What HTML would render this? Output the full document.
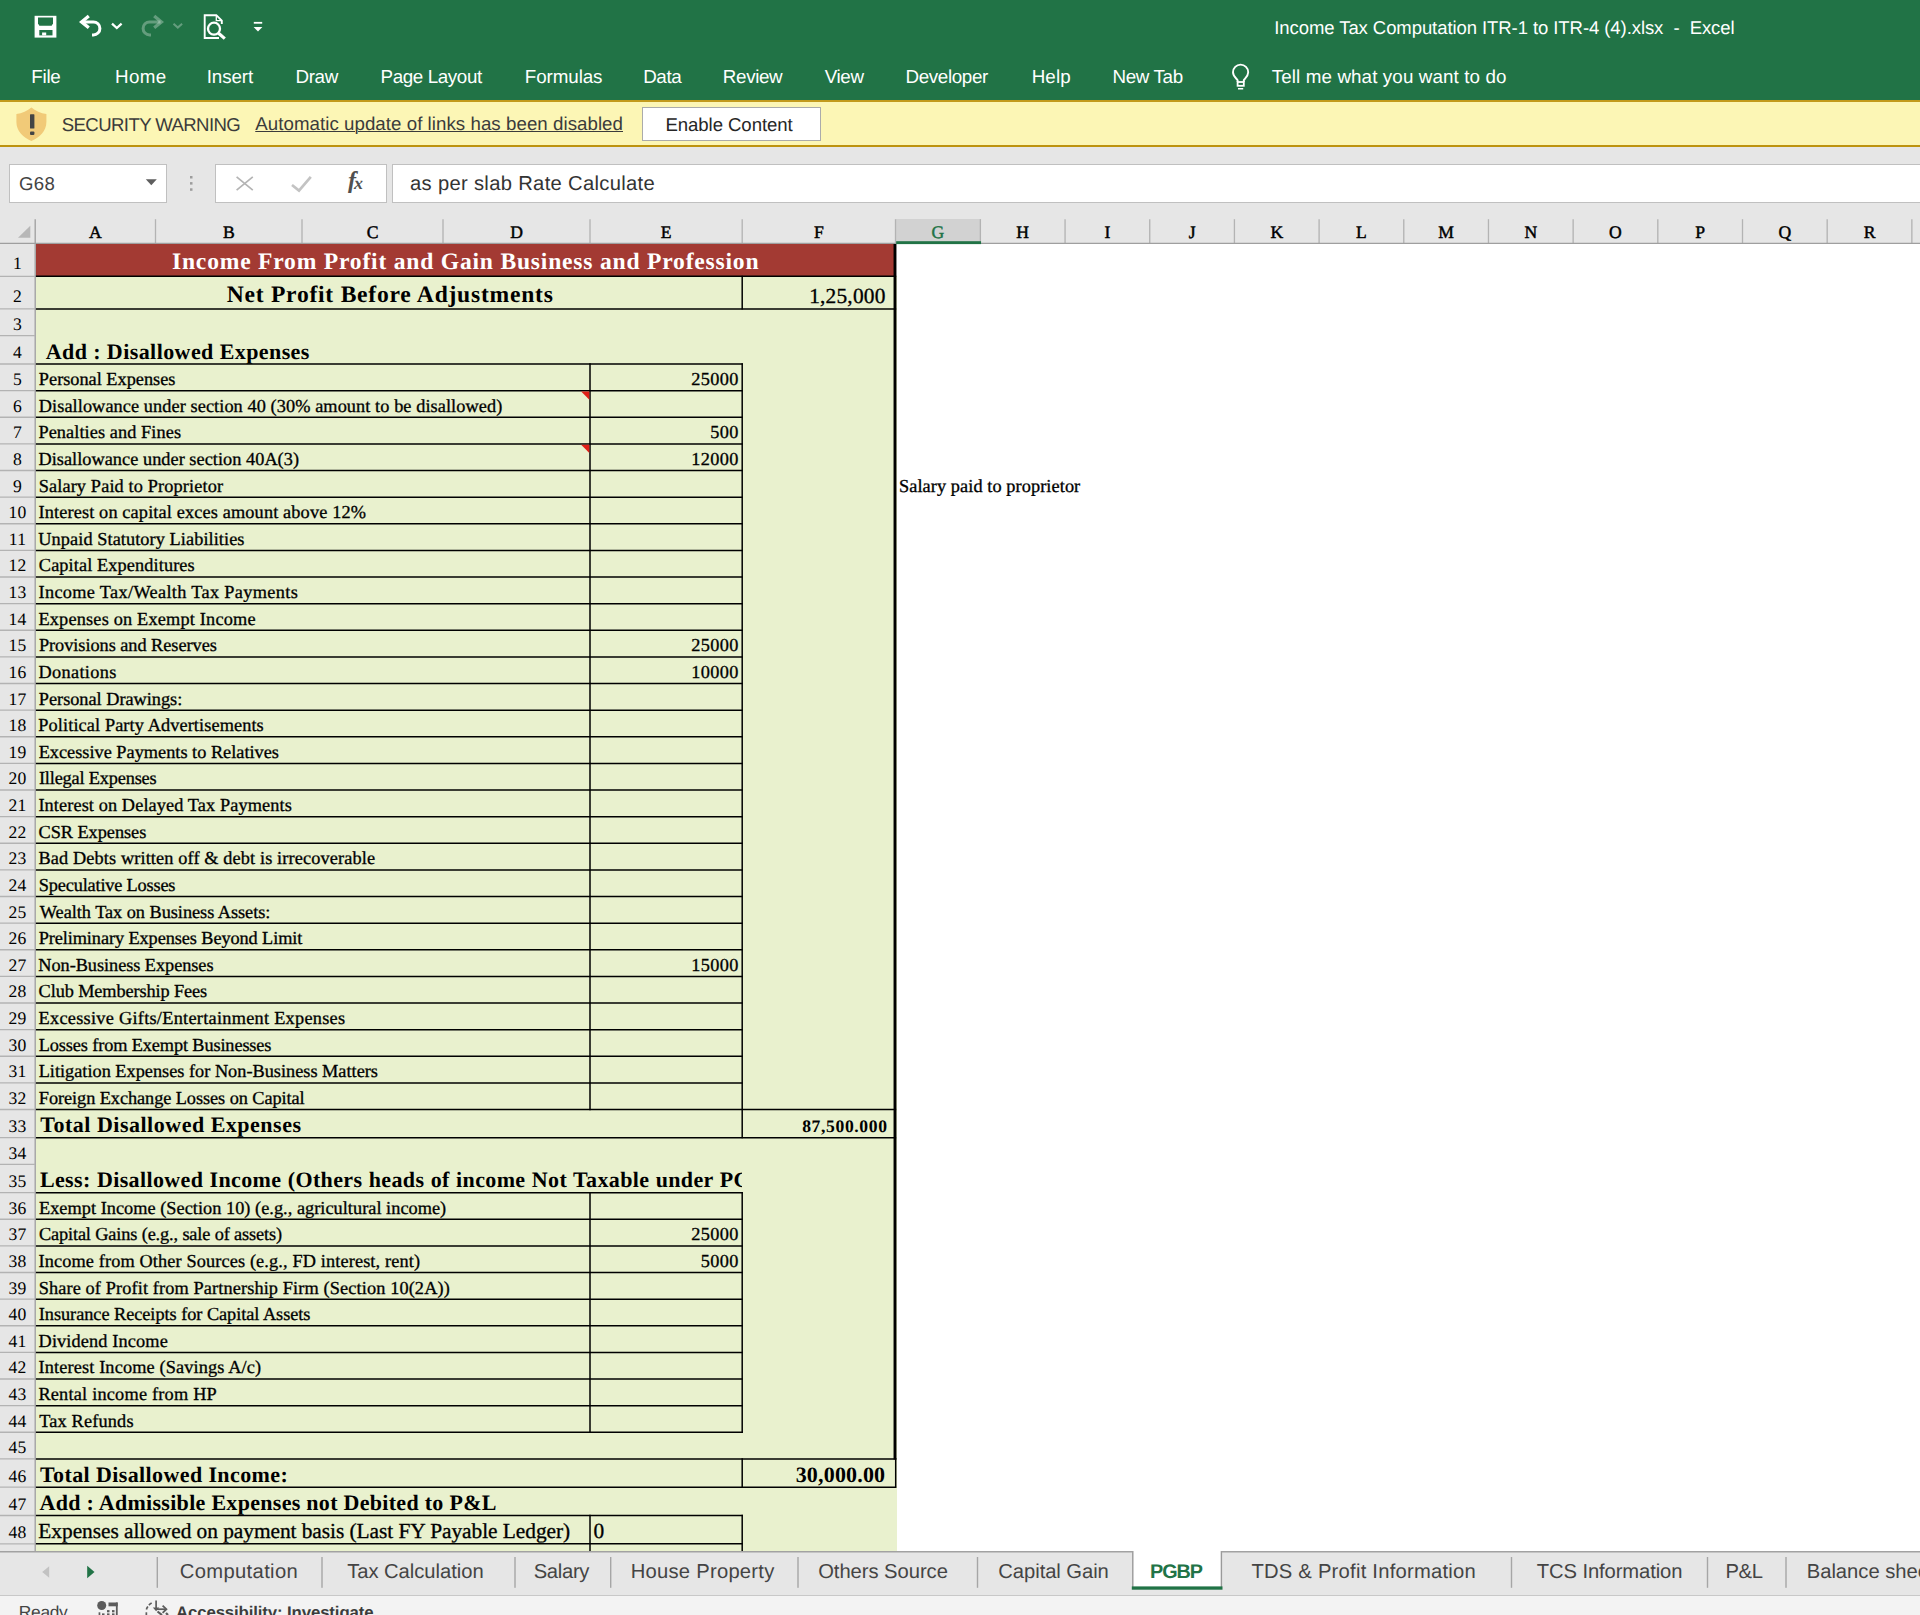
<!DOCTYPE html><html><head><meta charset="utf-8"><title>Excel</title>
<style>html,body{margin:0;padding:0;}body{width:1920px;height:1615px;position:relative;overflow:hidden;background:#fff;font-family:"Liberation Sans",sans-serif;text-rendering:geometricPrecision;}svg{position:absolute;left:0;top:0;overflow:visible}.t{position:absolute;white-space:pre;color:#000}.s{font-family:"Liberation Sans",sans-serif}.f{font-family:"Liberation Serif",serif}.b{position:absolute}</style></head><body>
<div class="b" style="left:0.00px;top:0.00px;width:1920.00px;height:100.00px;background:#217346;"></div>
<div class="t s" style="top:17px;line-height:21px;font-size:18.5px;color:#fff;letter-spacing:-0.073px;left:1274.25px;">Income Tax Computation ITR-1 to ITR-4 (4).xlsx  -  Excel</div>
<div class="t s" style="top:66px;line-height:21px;font-size:18.8px;color:#fff;letter-spacing:-0.2px;left:31.15px;">File</div>
<div class="t s" style="top:66px;line-height:21px;font-size:18.8px;color:#fff;letter-spacing:0.35px;left:115.00px;">Home</div>
<div class="t s" style="top:66px;line-height:21px;font-size:18.8px;color:#fff;letter-spacing:-0.08px;left:206.65px;">Insert</div>
<div class="t s" style="top:66px;line-height:21px;font-size:18.8px;color:#fff;letter-spacing:-0.35px;left:295.50px;">Draw</div>
<div class="t s" style="top:66px;line-height:21px;font-size:18.8px;color:#fff;letter-spacing:-0.38px;left:380.50px;">Page Layout</div>
<div class="t s" style="top:66px;line-height:21px;font-size:18.8px;color:#fff;letter-spacing:-0.086px;left:524.85px;">Formulas</div>
<div class="t s" style="top:66px;line-height:21px;font-size:18.8px;color:#fff;letter-spacing:-0.35px;left:643.15px;">Data</div>
<div class="t s" style="top:66px;line-height:21px;font-size:18.8px;color:#fff;letter-spacing:-0.35px;left:722.85px;">Review</div>
<div class="t s" style="top:66px;line-height:21px;font-size:18.8px;color:#fff;letter-spacing:-0.35px;left:824.65px;">View</div>
<div class="t s" style="top:66px;line-height:21px;font-size:18.8px;color:#fff;letter-spacing:-0.35px;left:905.50px;">Developer</div>
<div class="t s" style="top:66px;line-height:21px;font-size:18.8px;color:#fff;letter-spacing:0.133px;left:1031.65px;">Help</div>
<div class="t s" style="top:66px;line-height:21px;font-size:18.8px;color:#fff;letter-spacing:-0.35px;left:1112.50px;">New Tab</div>
<div class="t s" style="top:66px;line-height:21px;font-size:18.8px;color:#fff;letter-spacing:0.116px;left:1271.75px;">Tell me what you want to do</div>
<div class="b" style="left:0.00px;top:100.20px;width:1920.00px;height:46.40px;background:#fcf6b5;"></div>
<div class="b" style="left:0.00px;top:99.90px;width:1920.00px;height:1.70px;background:#c29a1c;"></div>
<div class="b" style="left:0.00px;top:145.00px;width:1920.00px;height:1.80px;background:#bd930f;"></div>
<svg width="1920" height="160" viewBox="0 0 1920 160"><rect x="34.6" y="15.8" width="21.8" height="21.8" fill="#fff"/><path d="M38,17.6 H53 V23.6 L51.6,25.7 H39.4 L38,23.6 Z" fill="#217346"/><rect x="39.3" y="30" width="13.2" height="5.4" fill="#217346"/><rect x="42.1" y="32.5" width="4.1" height="2.9" fill="#fff"/><path d="M88.8,16.0 L81.6,21.9 L88.8,27.8" fill="none" stroke="#fff" stroke-width="3.3" stroke-linejoin="miter"/><path d="M82.5,21.9 H93.4 A6.5,6.5 0 0 1 93.4,34.9 H92" fill="none" stroke="#fff" stroke-width="3.0"/><path d="M112,23.7 L116.8,28 L121.6,23.7" fill="none" stroke="#fff" stroke-width="2.3"/><path d="M154.2,16.0 L161.4,21.9 L154.2,27.8" fill="none" stroke="rgba(255,255,255,0.30)" stroke-width="3.3"/><path d="M160.5,21.9 H149.6 A6.5,6.5 0 0 0 149.6,34.9 H151" fill="none" stroke="rgba(255,255,255,0.30)" stroke-width="3.0"/><path d="M173.5,23.7 L177.8,27.6 L182.1,23.7" fill="none" stroke="rgba(255,255,255,0.30)" stroke-width="2.0"/><path d="M219,38 H204.7 V15.2 H216.3 L221.8,20.7 V24" fill="none" stroke="#fff" stroke-width="1.9"/><path d="M216.3,15.2 V20.7 H221.8" fill="none" stroke="#fff" stroke-width="1.3"/><circle cx="214" cy="28.7" r="6" fill="#217346" stroke="#fff" stroke-width="2.3"/><path d="M218.6,33.2 L224.8,38.6" stroke="#fff" stroke-width="3.2" fill="none"/><rect x="253.8" y="21.9" width="8.4" height="1.8" fill="#fff"/><polygon points="253.6,27 262.4,27 258,31.6" fill="#fff"/><path d="M1237.6,82 V80.2 C1236.6,78.6 1233,76.2 1233,72.2 A7.6,7.6 0 0 1 1248.2,72.2 C1248.2,76.2 1244.6,78.6 1243.8,80.2 V82" fill="none" stroke="#fff" stroke-width="1.9"/><rect x="1237.6" y="82" width="6.2" height="3.8" fill="none" stroke="#fff" stroke-width="1.8"/><rect x="1238" y="88" width="5.2" height="1.5" fill="#fff"/><path d="M31.4,107.6 C27.5,111 22,113.5 16.4,113.9 V122 C16.4,131 23,137.5 31.4,141 C39.8,137.5 46.4,131 46.4,122 V113.9 C40.8,113.5 35.3,111 31.4,107.6 Z" fill="#f1ca78"/><rect x="30" y="114.2" width="4.4" height="14.4" rx="0.6" fill="#444"/><rect x="30" y="131.6" width="4.4" height="3.3" rx="1" fill="#444"/></svg>
<div class="t s" style="top:114px;line-height:21px;font-size:18.6px;color:#3b3b3b;letter-spacing:-0.6px;left:61.75px;">SECURITY WARNING</div>
<div class="t s" style="top:113px;line-height:21px;font-size:18.7px;color:#3b3b3b;letter-spacing:0.048px;left:255.25px;text-decoration:underline;text-underline-offset:1.2px;text-decoration-thickness:1.3px;">Automatic update of links has been disabled</div>
<div class="b" style="left:642.00px;top:107.00px;width:178.50px;height:33.50px;background:#fff;box-sizing:border-box;border:1.33px solid #ababab;"></div>
<div class="t s" style="top:114px;line-height:21px;font-size:18.6px;color:#262626;letter-spacing:-0.077px;left:665.50px;">Enable Content</div>
<div class="b" style="left:0.00px;top:146.67px;width:1920.00px;height:72.00px;background:#e6e6e6;"></div>
<div class="b" style="left:8.50px;top:163.60px;width:158.30px;height:39.60px;background:#fff;box-sizing:border-box;border:1.5px solid #c0c0c0;"></div>
<div class="t s" style="top:173px;line-height:21px;font-size:18.6px;color:#444;letter-spacing:0.35px;left:19.00px;">G68</div>
<div class="b" style="left:215.40px;top:163.60px;width:171.20px;height:39.60px;background:#fff;box-sizing:border-box;border:1.5px solid #c0c0c0;"></div>
<div class="b" style="left:392.30px;top:163.60px;width:1540.00px;height:39.60px;background:#fff;box-sizing:border-box;border:1.5px solid #c0c0c0;"></div>
<div class="t s" style="top:173px;line-height:22px;font-size:20.2px;color:#333;letter-spacing:0.32px;left:410.00px;">as per slab Rate Calculate</div>
<svg width="1920" height="220" viewBox="0 0 1920 220"><polygon points="145.8,179.2 156.8,179.2 151.3,185.2" fill="#5e5e5e"/><rect x="190" y="176.0" width="2.5" height="2.5" fill="#9d9d9d"/><rect x="190" y="182.10000000000002" width="2.5" height="2.5" fill="#9d9d9d"/><rect x="190" y="188.3" width="2.5" height="2.5" fill="#9d9d9d"/><path d="M236.6,176.8 L252.8,190.2 M252.8,176.8 L236.6,190.2" stroke="#b4b4b4" stroke-width="1.7" fill="none"/><path d="M292,185 L299,190.6 L310.8,176.8" stroke="#c3c3c3" stroke-width="2.7" fill="none"/></svg><div class="t f" style="left:348px;top:167px;font-style:italic;color:#505050;line-height:28px;"><span style="font-size:24px;font-weight:700;">f</span><span style="font-size:18px;font-weight:700;margin-left:-2px;position:relative;top:1px">x</span></div>
<div class="b" style="left:0.00px;top:217.60px;width:1920.00px;height:26.37px;background:#e6e6e6;"></div>
<div class="b" style="left:0.00px;top:243.97px;width:35.87px;height:1307.04px;background:#e6e6e6;"></div>
<div class="b" style="left:896.16px;top:219.20px;width:84.88px;height:24.77px;background:#d2d2d2;"></div>
<div class="b" style="left:35.87px;top:243.97px;width:860.30px;height:33.00px;background:#a33a33;"></div>
<div class="b" style="left:35.87px;top:275.64px;width:861.20px;height:1275.36px;background:#e9f1ce;"></div>
<svg width="1920" height="1615" viewBox="0 0 1920 1615"><line x1="155.50" y1="219.20" x2="155.50" y2="243.30" stroke="#b3b3b3" stroke-width="1.33"/><line x1="302.00" y1="219.20" x2="302.00" y2="243.30" stroke="#b3b3b3" stroke-width="1.33"/><line x1="443.00" y1="219.20" x2="443.00" y2="243.30" stroke="#b3b3b3" stroke-width="1.33"/><line x1="590.00" y1="219.20" x2="590.00" y2="243.30" stroke="#b3b3b3" stroke-width="1.33"/><line x1="742.20" y1="219.20" x2="742.20" y2="243.30" stroke="#b3b3b3" stroke-width="1.33"/><line x1="895.50" y1="219.20" x2="895.50" y2="243.30" stroke="#b3b3b3" stroke-width="1.33"/><line x1="980.38" y1="219.20" x2="980.38" y2="243.30" stroke="#b3b3b3" stroke-width="1.33"/><line x1="1065.06" y1="219.20" x2="1065.06" y2="243.30" stroke="#b3b3b3" stroke-width="1.33"/><line x1="1149.74" y1="219.20" x2="1149.74" y2="243.30" stroke="#b3b3b3" stroke-width="1.33"/><line x1="1234.42" y1="219.20" x2="1234.42" y2="243.30" stroke="#b3b3b3" stroke-width="1.33"/><line x1="1319.10" y1="219.20" x2="1319.10" y2="243.30" stroke="#b3b3b3" stroke-width="1.33"/><line x1="1403.78" y1="219.20" x2="1403.78" y2="243.30" stroke="#b3b3b3" stroke-width="1.33"/><line x1="1488.46" y1="219.20" x2="1488.46" y2="243.30" stroke="#b3b3b3" stroke-width="1.33"/><line x1="1573.14" y1="219.20" x2="1573.14" y2="243.30" stroke="#b3b3b3" stroke-width="1.33"/><line x1="1657.82" y1="219.20" x2="1657.82" y2="243.30" stroke="#b3b3b3" stroke-width="1.33"/><line x1="1742.50" y1="219.20" x2="1742.50" y2="243.30" stroke="#b3b3b3" stroke-width="1.33"/><line x1="1827.18" y1="219.20" x2="1827.18" y2="243.30" stroke="#b3b3b3" stroke-width="1.33"/><line x1="1911.86" y1="219.20" x2="1911.86" y2="243.30" stroke="#b3b3b3" stroke-width="1.33"/><line x1="1996.54" y1="219.20" x2="1996.54" y2="243.30" stroke="#b3b3b3" stroke-width="1.33"/><line x1="0.00" y1="276.30" x2="34.60" y2="276.30" stroke="#b3b3b3" stroke-width="1.33"/><line x1="0.00" y1="308.90" x2="34.60" y2="308.90" stroke="#b3b3b3" stroke-width="1.33"/><line x1="0.00" y1="335.60" x2="34.60" y2="335.60" stroke="#b3b3b3" stroke-width="1.33"/><line x1="0.00" y1="364.00" x2="34.60" y2="364.00" stroke="#b3b3b3" stroke-width="1.33"/><line x1="0.00" y1="390.63" x2="34.60" y2="390.63" stroke="#b3b3b3" stroke-width="1.33"/><line x1="0.00" y1="417.25" x2="34.60" y2="417.25" stroke="#b3b3b3" stroke-width="1.33"/><line x1="0.00" y1="443.88" x2="34.60" y2="443.88" stroke="#b3b3b3" stroke-width="1.33"/><line x1="0.00" y1="470.50" x2="34.60" y2="470.50" stroke="#b3b3b3" stroke-width="1.33"/><line x1="0.00" y1="497.13" x2="34.60" y2="497.13" stroke="#b3b3b3" stroke-width="1.33"/><line x1="0.00" y1="523.76" x2="34.60" y2="523.76" stroke="#b3b3b3" stroke-width="1.33"/><line x1="0.00" y1="550.38" x2="34.60" y2="550.38" stroke="#b3b3b3" stroke-width="1.33"/><line x1="0.00" y1="577.01" x2="34.60" y2="577.01" stroke="#b3b3b3" stroke-width="1.33"/><line x1="0.00" y1="603.63" x2="34.60" y2="603.63" stroke="#b3b3b3" stroke-width="1.33"/><line x1="0.00" y1="630.26" x2="34.60" y2="630.26" stroke="#b3b3b3" stroke-width="1.33"/><line x1="0.00" y1="656.89" x2="34.60" y2="656.89" stroke="#b3b3b3" stroke-width="1.33"/><line x1="0.00" y1="683.51" x2="34.60" y2="683.51" stroke="#b3b3b3" stroke-width="1.33"/><line x1="0.00" y1="710.14" x2="34.60" y2="710.14" stroke="#b3b3b3" stroke-width="1.33"/><line x1="0.00" y1="736.76" x2="34.60" y2="736.76" stroke="#b3b3b3" stroke-width="1.33"/><line x1="0.00" y1="763.39" x2="34.60" y2="763.39" stroke="#b3b3b3" stroke-width="1.33"/><line x1="0.00" y1="790.02" x2="34.60" y2="790.02" stroke="#b3b3b3" stroke-width="1.33"/><line x1="0.00" y1="816.64" x2="34.60" y2="816.64" stroke="#b3b3b3" stroke-width="1.33"/><line x1="0.00" y1="843.27" x2="34.60" y2="843.27" stroke="#b3b3b3" stroke-width="1.33"/><line x1="0.00" y1="869.89" x2="34.60" y2="869.89" stroke="#b3b3b3" stroke-width="1.33"/><line x1="0.00" y1="896.52" x2="34.60" y2="896.52" stroke="#b3b3b3" stroke-width="1.33"/><line x1="0.00" y1="923.15" x2="34.60" y2="923.15" stroke="#b3b3b3" stroke-width="1.33"/><line x1="0.00" y1="949.77" x2="34.60" y2="949.77" stroke="#b3b3b3" stroke-width="1.33"/><line x1="0.00" y1="976.40" x2="34.60" y2="976.40" stroke="#b3b3b3" stroke-width="1.33"/><line x1="0.00" y1="1003.02" x2="34.60" y2="1003.02" stroke="#b3b3b3" stroke-width="1.33"/><line x1="0.00" y1="1029.65" x2="34.60" y2="1029.65" stroke="#b3b3b3" stroke-width="1.33"/><line x1="0.00" y1="1056.28" x2="34.60" y2="1056.28" stroke="#b3b3b3" stroke-width="1.33"/><line x1="0.00" y1="1082.90" x2="34.60" y2="1082.90" stroke="#b3b3b3" stroke-width="1.33"/><line x1="0.00" y1="1109.53" x2="34.60" y2="1109.53" stroke="#b3b3b3" stroke-width="1.33"/><line x1="0.00" y1="1137.63" x2="34.60" y2="1137.63" stroke="#b3b3b3" stroke-width="1.33"/><line x1="0.00" y1="1164.43" x2="34.60" y2="1164.43" stroke="#b3b3b3" stroke-width="1.33"/><line x1="0.00" y1="1192.63" x2="34.60" y2="1192.63" stroke="#b3b3b3" stroke-width="1.33"/><line x1="0.00" y1="1219.25" x2="34.60" y2="1219.25" stroke="#b3b3b3" stroke-width="1.33"/><line x1="0.00" y1="1245.88" x2="34.60" y2="1245.88" stroke="#b3b3b3" stroke-width="1.33"/><line x1="0.00" y1="1272.51" x2="34.60" y2="1272.51" stroke="#b3b3b3" stroke-width="1.33"/><line x1="0.00" y1="1299.13" x2="34.60" y2="1299.13" stroke="#b3b3b3" stroke-width="1.33"/><line x1="0.00" y1="1325.76" x2="34.60" y2="1325.76" stroke="#b3b3b3" stroke-width="1.33"/><line x1="0.00" y1="1352.38" x2="34.60" y2="1352.38" stroke="#b3b3b3" stroke-width="1.33"/><line x1="0.00" y1="1379.01" x2="34.60" y2="1379.01" stroke="#b3b3b3" stroke-width="1.33"/><line x1="0.00" y1="1405.64" x2="34.60" y2="1405.64" stroke="#b3b3b3" stroke-width="1.33"/><line x1="0.00" y1="1432.26" x2="34.60" y2="1432.26" stroke="#b3b3b3" stroke-width="1.33"/><line x1="0.00" y1="1458.89" x2="34.60" y2="1458.89" stroke="#b3b3b3" stroke-width="1.33"/><line x1="0.00" y1="1487.20" x2="34.60" y2="1487.20" stroke="#b3b3b3" stroke-width="1.33"/><line x1="0.00" y1="1515.50" x2="34.60" y2="1515.50" stroke="#b3b3b3" stroke-width="1.33"/><line x1="0.00" y1="1543.80" x2="34.60" y2="1543.80" stroke="#b3b3b3" stroke-width="1.33"/><line x1="0.00" y1="243.30" x2="1920.00" y2="243.30" stroke="#9f9f9f" stroke-width="1.33"/><line x1="35.20" y1="219.20" x2="35.20" y2="1551.00" stroke="#9f9f9f" stroke-width="1.33"/><rect x="896.16" y="241.20" width="84.88" height="2.9" fill="#217346"/><polygon points="30.3,225.8 30.3,237.8 18,237.8" fill="#b7b7b7"/><line x1="35.87" y1="276.30" x2="896.16" y2="276.30" stroke="#000" stroke-width="1.50"/><line x1="35.87" y1="308.90" x2="896.16" y2="308.90" stroke="#000" stroke-width="1.50"/><line x1="742.20" y1="275.63" x2="742.20" y2="309.56" stroke="#000" stroke-width="1.50"/><line x1="35.87" y1="364.00" x2="742.87" y2="364.00" stroke="#000" stroke-width="1.50"/><line x1="35.87" y1="390.63" x2="742.87" y2="390.63" stroke="#000" stroke-width="1.50"/><line x1="35.87" y1="417.25" x2="742.87" y2="417.25" stroke="#000" stroke-width="1.50"/><line x1="35.87" y1="443.88" x2="742.87" y2="443.88" stroke="#000" stroke-width="1.50"/><line x1="35.87" y1="470.50" x2="742.87" y2="470.50" stroke="#000" stroke-width="1.50"/><line x1="35.87" y1="497.13" x2="742.87" y2="497.13" stroke="#000" stroke-width="1.50"/><line x1="35.87" y1="523.76" x2="742.87" y2="523.76" stroke="#000" stroke-width="1.50"/><line x1="35.87" y1="550.38" x2="742.87" y2="550.38" stroke="#000" stroke-width="1.50"/><line x1="35.87" y1="577.01" x2="742.87" y2="577.01" stroke="#000" stroke-width="1.50"/><line x1="35.87" y1="603.63" x2="742.87" y2="603.63" stroke="#000" stroke-width="1.50"/><line x1="35.87" y1="630.26" x2="742.87" y2="630.26" stroke="#000" stroke-width="1.50"/><line x1="35.87" y1="656.89" x2="742.87" y2="656.89" stroke="#000" stroke-width="1.50"/><line x1="35.87" y1="683.51" x2="742.87" y2="683.51" stroke="#000" stroke-width="1.50"/><line x1="35.87" y1="710.14" x2="742.87" y2="710.14" stroke="#000" stroke-width="1.50"/><line x1="35.87" y1="736.76" x2="742.87" y2="736.76" stroke="#000" stroke-width="1.50"/><line x1="35.87" y1="763.39" x2="742.87" y2="763.39" stroke="#000" stroke-width="1.50"/><line x1="35.87" y1="790.02" x2="742.87" y2="790.02" stroke="#000" stroke-width="1.50"/><line x1="35.87" y1="816.64" x2="742.87" y2="816.64" stroke="#000" stroke-width="1.50"/><line x1="35.87" y1="843.27" x2="742.87" y2="843.27" stroke="#000" stroke-width="1.50"/><line x1="35.87" y1="869.89" x2="742.87" y2="869.89" stroke="#000" stroke-width="1.50"/><line x1="35.87" y1="896.52" x2="742.87" y2="896.52" stroke="#000" stroke-width="1.50"/><line x1="35.87" y1="923.15" x2="742.87" y2="923.15" stroke="#000" stroke-width="1.50"/><line x1="35.87" y1="949.77" x2="742.87" y2="949.77" stroke="#000" stroke-width="1.50"/><line x1="35.87" y1="976.40" x2="742.87" y2="976.40" stroke="#000" stroke-width="1.50"/><line x1="35.87" y1="1003.02" x2="742.87" y2="1003.02" stroke="#000" stroke-width="1.50"/><line x1="35.87" y1="1029.65" x2="742.87" y2="1029.65" stroke="#000" stroke-width="1.50"/><line x1="35.87" y1="1056.28" x2="742.87" y2="1056.28" stroke="#000" stroke-width="1.50"/><line x1="35.87" y1="1082.90" x2="742.87" y2="1082.90" stroke="#000" stroke-width="1.50"/><line x1="35.87" y1="1109.53" x2="896.16" y2="1109.53" stroke="#000" stroke-width="1.50"/><line x1="590.00" y1="363.33" x2="590.00" y2="1110.19" stroke="#000" stroke-width="1.50"/><line x1="742.20" y1="363.33" x2="742.20" y2="1138.29" stroke="#000" stroke-width="1.50"/><line x1="35.87" y1="1137.63" x2="896.16" y2="1137.63" stroke="#000" stroke-width="1.50"/><line x1="35.87" y1="1192.63" x2="742.87" y2="1192.63" stroke="#000" stroke-width="1.50"/><line x1="35.87" y1="1219.25" x2="742.87" y2="1219.25" stroke="#000" stroke-width="1.50"/><line x1="35.87" y1="1245.88" x2="742.87" y2="1245.88" stroke="#000" stroke-width="1.50"/><line x1="35.87" y1="1272.51" x2="742.87" y2="1272.51" stroke="#000" stroke-width="1.50"/><line x1="35.87" y1="1299.13" x2="742.87" y2="1299.13" stroke="#000" stroke-width="1.50"/><line x1="35.87" y1="1325.76" x2="742.87" y2="1325.76" stroke="#000" stroke-width="1.50"/><line x1="35.87" y1="1352.38" x2="742.87" y2="1352.38" stroke="#000" stroke-width="1.50"/><line x1="35.87" y1="1379.01" x2="742.87" y2="1379.01" stroke="#000" stroke-width="1.50"/><line x1="35.87" y1="1405.64" x2="742.87" y2="1405.64" stroke="#000" stroke-width="1.50"/><line x1="35.87" y1="1432.26" x2="742.87" y2="1432.26" stroke="#000" stroke-width="1.50"/><line x1="590.00" y1="1191.96" x2="590.00" y2="1432.93" stroke="#000" stroke-width="1.50"/><line x1="742.20" y1="1191.96" x2="742.20" y2="1432.93" stroke="#000" stroke-width="1.50"/><line x1="35.87" y1="1458.89" x2="896.16" y2="1458.89" stroke="#000" stroke-width="1.50"/><line x1="35.87" y1="1487.20" x2="896.16" y2="1487.20" stroke="#000" stroke-width="1.50"/><line x1="742.20" y1="1458.22" x2="742.20" y2="1487.87" stroke="#000" stroke-width="1.50"/><line x1="895.70" y1="1458.22" x2="895.70" y2="1487.87" stroke="#000" stroke-width="1.50"/><line x1="35.87" y1="1515.50" x2="742.87" y2="1515.50" stroke="#000" stroke-width="1.50"/><line x1="35.87" y1="1543.80" x2="742.87" y2="1543.80" stroke="#000" stroke-width="1.50"/><line x1="590.00" y1="1514.84" x2="590.00" y2="1551.00" stroke="#000" stroke-width="1.50"/><line x1="742.20" y1="1514.84" x2="742.20" y2="1551.00" stroke="#000" stroke-width="1.50"/><line x1="895.00" y1="243.97" x2="895.00" y2="1459.55" stroke="#000" stroke-width="2.90"/><polygon points="581.13,391.49 589.34,391.49 589.34,399.69" fill="#e02018"/><polygon points="581.13,444.74 589.34,444.74 589.34,452.94" fill="#e02018"/></svg>
<div class="t f" style="top:222px;line-height:20px;font-size:17.6px;left:-504.65px;width:1200px;text-align:center;-webkit-text-stroke:0.45px currentColor;">A</div>
<div class="t f" style="top:222px;line-height:20px;font-size:17.6px;left:-371.25px;width:1200px;text-align:center;-webkit-text-stroke:0.45px currentColor;">B</div>
<div class="t f" style="top:222px;line-height:20px;font-size:17.6px;left:-227.50px;width:1200px;text-align:center;-webkit-text-stroke:0.45px currentColor;">C</div>
<div class="t f" style="top:222px;line-height:20px;font-size:17.6px;left:-83.50px;width:1200px;text-align:center;-webkit-text-stroke:0.45px currentColor;">D</div>
<div class="t f" style="top:222px;line-height:20px;font-size:17.6px;left:66.10px;width:1200px;text-align:center;-webkit-text-stroke:0.45px currentColor;">E</div>
<div class="t f" style="top:222px;line-height:20px;font-size:17.6px;left:218.85px;width:1200px;text-align:center;-webkit-text-stroke:0.45px currentColor;">F</div>
<div class="t f" style="top:222px;line-height:20px;font-size:17.6px;color:#217346;left:337.94px;width:1200px;text-align:center;-webkit-text-stroke:0.45px currentColor;">G</div>
<div class="t f" style="top:222px;line-height:20px;font-size:17.6px;left:422.72px;width:1200px;text-align:center;-webkit-text-stroke:0.45px currentColor;">H</div>
<div class="t f" style="top:222px;line-height:20px;font-size:17.6px;left:507.40px;width:1200px;text-align:center;-webkit-text-stroke:0.45px currentColor;">I</div>
<div class="t f" style="top:222px;line-height:20px;font-size:17.6px;left:592.08px;width:1200px;text-align:center;-webkit-text-stroke:0.45px currentColor;">J</div>
<div class="t f" style="top:222px;line-height:20px;font-size:17.6px;left:676.76px;width:1200px;text-align:center;-webkit-text-stroke:0.45px currentColor;">K</div>
<div class="t f" style="top:222px;line-height:20px;font-size:17.6px;left:761.44px;width:1200px;text-align:center;-webkit-text-stroke:0.45px currentColor;">L</div>
<div class="t f" style="top:222px;line-height:20px;font-size:17.6px;left:846.12px;width:1200px;text-align:center;-webkit-text-stroke:0.45px currentColor;">M</div>
<div class="t f" style="top:222px;line-height:20px;font-size:17.6px;left:930.80px;width:1200px;text-align:center;-webkit-text-stroke:0.45px currentColor;">N</div>
<div class="t f" style="top:222px;line-height:20px;font-size:17.6px;left:1015.48px;width:1200px;text-align:center;-webkit-text-stroke:0.45px currentColor;">O</div>
<div class="t f" style="top:222px;line-height:20px;font-size:17.6px;left:1100.16px;width:1200px;text-align:center;-webkit-text-stroke:0.45px currentColor;">P</div>
<div class="t f" style="top:222px;line-height:20px;font-size:17.6px;left:1184.84px;width:1200px;text-align:center;-webkit-text-stroke:0.45px currentColor;">Q</div>
<div class="t f" style="top:222px;line-height:20px;font-size:17.6px;left:1269.52px;width:1200px;text-align:center;-webkit-text-stroke:0.45px currentColor;">R</div>
<div class="t f" style="top:253px;line-height:20px;font-size:17.6px;letter-spacing:0.3px;left:-582.40px;width:1200px;text-align:center;">1</div>
<div class="t f" style="top:286px;line-height:20px;font-size:17.6px;letter-spacing:0.3px;left:-582.40px;width:1200px;text-align:center;">2</div>
<div class="t f" style="top:314px;line-height:20px;font-size:17.6px;letter-spacing:0.3px;left:-582.40px;width:1200px;text-align:center;">3</div>
<div class="t f" style="top:342px;line-height:20px;font-size:17.6px;letter-spacing:0.3px;left:-582.40px;width:1200px;text-align:center;">4</div>
<div class="t f" style="top:369px;line-height:20px;font-size:17.6px;letter-spacing:0.3px;left:-582.40px;width:1200px;text-align:center;">5</div>
<div class="t f" style="top:396px;line-height:20px;font-size:17.6px;letter-spacing:0.3px;left:-582.40px;width:1200px;text-align:center;">6</div>
<div class="t f" style="top:422px;line-height:20px;font-size:17.6px;letter-spacing:0.3px;left:-582.40px;width:1200px;text-align:center;">7</div>
<div class="t f" style="top:449px;line-height:20px;font-size:17.6px;letter-spacing:0.3px;left:-582.40px;width:1200px;text-align:center;">8</div>
<div class="t f" style="top:476px;line-height:20px;font-size:17.6px;letter-spacing:0.3px;left:-582.40px;width:1200px;text-align:center;">9</div>
<div class="t f" style="top:502px;line-height:20px;font-size:17.6px;letter-spacing:0.3px;left:-582.40px;width:1200px;text-align:center;">10</div>
<div class="t f" style="top:529px;line-height:20px;font-size:17.6px;letter-spacing:0.3px;left:-582.40px;width:1200px;text-align:center;">11</div>
<div class="t f" style="top:555px;line-height:20px;font-size:17.6px;letter-spacing:0.3px;left:-582.40px;width:1200px;text-align:center;">12</div>
<div class="t f" style="top:582px;line-height:20px;font-size:17.6px;letter-spacing:0.3px;left:-582.40px;width:1200px;text-align:center;">13</div>
<div class="t f" style="top:609px;line-height:20px;font-size:17.6px;letter-spacing:0.3px;left:-582.40px;width:1200px;text-align:center;">14</div>
<div class="t f" style="top:635px;line-height:20px;font-size:17.6px;letter-spacing:0.3px;left:-582.40px;width:1200px;text-align:center;">15</div>
<div class="t f" style="top:662px;line-height:20px;font-size:17.6px;letter-spacing:0.3px;left:-582.40px;width:1200px;text-align:center;">16</div>
<div class="t f" style="top:689px;line-height:20px;font-size:17.6px;letter-spacing:0.3px;left:-582.40px;width:1200px;text-align:center;">17</div>
<div class="t f" style="top:715px;line-height:20px;font-size:17.6px;letter-spacing:0.3px;left:-582.40px;width:1200px;text-align:center;">18</div>
<div class="t f" style="top:742px;line-height:20px;font-size:17.6px;letter-spacing:0.3px;left:-582.40px;width:1200px;text-align:center;">19</div>
<div class="t f" style="top:768px;line-height:20px;font-size:17.6px;letter-spacing:0.3px;left:-582.40px;width:1200px;text-align:center;">20</div>
<div class="t f" style="top:795px;line-height:20px;font-size:17.6px;letter-spacing:0.3px;left:-582.40px;width:1200px;text-align:center;">21</div>
<div class="t f" style="top:822px;line-height:20px;font-size:17.6px;letter-spacing:0.3px;left:-582.40px;width:1200px;text-align:center;">22</div>
<div class="t f" style="top:848px;line-height:20px;font-size:17.6px;letter-spacing:0.3px;left:-582.40px;width:1200px;text-align:center;">23</div>
<div class="t f" style="top:875px;line-height:20px;font-size:17.6px;letter-spacing:0.3px;left:-582.40px;width:1200px;text-align:center;">24</div>
<div class="t f" style="top:902px;line-height:20px;font-size:17.6px;letter-spacing:0.3px;left:-582.40px;width:1200px;text-align:center;">25</div>
<div class="t f" style="top:928px;line-height:20px;font-size:17.6px;letter-spacing:0.3px;left:-582.40px;width:1200px;text-align:center;">26</div>
<div class="t f" style="top:955px;line-height:20px;font-size:17.6px;letter-spacing:0.3px;left:-582.40px;width:1200px;text-align:center;">27</div>
<div class="t f" style="top:981px;line-height:20px;font-size:17.6px;letter-spacing:0.3px;left:-582.40px;width:1200px;text-align:center;">28</div>
<div class="t f" style="top:1008px;line-height:20px;font-size:17.6px;letter-spacing:0.3px;left:-582.40px;width:1200px;text-align:center;">29</div>
<div class="t f" style="top:1035px;line-height:20px;font-size:17.6px;letter-spacing:0.3px;left:-582.40px;width:1200px;text-align:center;">30</div>
<div class="t f" style="top:1061px;line-height:20px;font-size:17.6px;letter-spacing:0.3px;left:-582.40px;width:1200px;text-align:center;">31</div>
<div class="t f" style="top:1088px;line-height:20px;font-size:17.6px;letter-spacing:0.3px;left:-582.40px;width:1200px;text-align:center;">32</div>
<div class="t f" style="top:1116px;line-height:20px;font-size:17.6px;letter-spacing:0.3px;left:-582.40px;width:1200px;text-align:center;">33</div>
<div class="t f" style="top:1143px;line-height:20px;font-size:17.6px;letter-spacing:0.3px;left:-582.40px;width:1200px;text-align:center;">34</div>
<div class="t f" style="top:1171px;line-height:20px;font-size:17.6px;letter-spacing:0.3px;left:-582.40px;width:1200px;text-align:center;">35</div>
<div class="t f" style="top:1198px;line-height:20px;font-size:17.6px;letter-spacing:0.3px;left:-582.40px;width:1200px;text-align:center;">36</div>
<div class="t f" style="top:1224px;line-height:20px;font-size:17.6px;letter-spacing:0.3px;left:-582.40px;width:1200px;text-align:center;">37</div>
<div class="t f" style="top:1251px;line-height:20px;font-size:17.6px;letter-spacing:0.3px;left:-582.40px;width:1200px;text-align:center;">38</div>
<div class="t f" style="top:1278px;line-height:20px;font-size:17.6px;letter-spacing:0.3px;left:-582.40px;width:1200px;text-align:center;">39</div>
<div class="t f" style="top:1304px;line-height:20px;font-size:17.6px;letter-spacing:0.3px;left:-582.40px;width:1200px;text-align:center;">40</div>
<div class="t f" style="top:1331px;line-height:20px;font-size:17.6px;letter-spacing:0.3px;left:-582.40px;width:1200px;text-align:center;">41</div>
<div class="t f" style="top:1357px;line-height:20px;font-size:17.6px;letter-spacing:0.3px;left:-582.40px;width:1200px;text-align:center;">42</div>
<div class="t f" style="top:1384px;line-height:20px;font-size:17.6px;letter-spacing:0.3px;left:-582.40px;width:1200px;text-align:center;">43</div>
<div class="t f" style="top:1411px;line-height:20px;font-size:17.6px;letter-spacing:0.3px;left:-582.40px;width:1200px;text-align:center;">44</div>
<div class="t f" style="top:1437px;line-height:20px;font-size:17.6px;letter-spacing:0.3px;left:-582.40px;width:1200px;text-align:center;">45</div>
<div class="t f" style="top:1466px;line-height:20px;font-size:17.6px;letter-spacing:0.3px;left:-582.40px;width:1200px;text-align:center;">46</div>
<div class="t f" style="top:1494px;line-height:20px;font-size:17.6px;letter-spacing:0.3px;left:-582.40px;width:1200px;text-align:center;">47</div>
<div class="t f" style="top:1522px;line-height:20px;font-size:17.6px;letter-spacing:0.3px;left:-582.40px;width:1200px;text-align:center;">48</div>
<div class="t f" style="top:249px;line-height:26px;font-size:23.6px;font-weight:700;color:#fff;letter-spacing:0.784px;left:172.00px;">Income From Profit and Gain Business and Profession</div>
<div class="t f" style="top:282px;line-height:26px;font-size:23.6px;font-weight:700;letter-spacing:0.75px;left:226.70px;">Net Profit Before Adjustments</div>
<div class="t f" style="top:284px;line-height:24px;font-size:21.4px;letter-spacing:0.2px;left:809.15px;-webkit-text-stroke:0.32px currentColor;">1,25,000</div>
<div class="t f" style="top:339px;line-height:25px;font-size:22.0px;font-weight:700;letter-spacing:0.417px;left:45.70px;">Add : Disallowed Expenses</div>
<div class="t f" style="top:369px;line-height:20px;font-size:18.3px;left:38.85px;-webkit-text-stroke:0.32px currentColor;">Personal Expenses</div>
<div class="t f" style="top:369px;line-height:20px;font-size:18.3px;letter-spacing:0.35px;right:1181.70px;text-align:right;margin-right:-0.35px;-webkit-text-stroke:0.32px currentColor;">25000</div>
<div class="t f" style="top:396px;line-height:20px;font-size:18.3px;letter-spacing:0.079px;left:38.75px;-webkit-text-stroke:0.32px currentColor;">Disallowance under section 40 (30% amount to be disallowed)</div>
<div class="t f" style="top:422px;line-height:20px;font-size:18.3px;letter-spacing:0.078px;left:38.45px;-webkit-text-stroke:0.32px currentColor;">Penalties and Fines</div>
<div class="t f" style="top:422px;line-height:20px;font-size:18.3px;letter-spacing:0.35px;right:1181.70px;text-align:right;margin-right:-0.35px;-webkit-text-stroke:0.32px currentColor;">500</div>
<div class="t f" style="top:449px;line-height:20px;font-size:18.3px;letter-spacing:0.038px;left:38.40px;-webkit-text-stroke:0.32px currentColor;">Disallowance under section 40A(3)</div>
<div class="t f" style="top:449px;line-height:20px;font-size:18.3px;letter-spacing:0.35px;right:1181.70px;text-align:right;margin-right:-0.35px;-webkit-text-stroke:0.32px currentColor;">12000</div>
<div class="t f" style="top:476px;line-height:20px;font-size:18.3px;letter-spacing:0.133px;left:38.65px;-webkit-text-stroke:0.32px currentColor;">Salary Paid to Proprietor</div>
<div class="t f" style="top:502px;line-height:20px;font-size:18.3px;letter-spacing:0.136px;left:38.50px;-webkit-text-stroke:0.32px currentColor;">Interest on capital exces amount above 12%</div>
<div class="t f" style="top:529px;line-height:20px;font-size:18.3px;letter-spacing:0.075px;left:38.35px;-webkit-text-stroke:0.32px currentColor;">Unpaid Statutory Liabilities</div>
<div class="t f" style="top:555px;line-height:20px;font-size:18.3px;letter-spacing:0.106px;left:38.85px;-webkit-text-stroke:0.32px currentColor;">Capital Expenditures</div>
<div class="t f" style="top:582px;line-height:20px;font-size:18.3px;letter-spacing:0.331px;left:38.50px;-webkit-text-stroke:0.32px currentColor;">Income Tax/Wealth Tax Payments</div>
<div class="t f" style="top:609px;line-height:20px;font-size:18.3px;letter-spacing:0.184px;left:38.45px;-webkit-text-stroke:0.32px currentColor;">Expenses on Exempt Income</div>
<div class="t f" style="top:635px;line-height:20px;font-size:18.3px;letter-spacing:-0.036px;left:38.90px;-webkit-text-stroke:0.32px currentColor;">Provisions and Reserves</div>
<div class="t f" style="top:635px;line-height:20px;font-size:18.3px;letter-spacing:0.35px;right:1181.70px;text-align:right;margin-right:-0.35px;-webkit-text-stroke:0.32px currentColor;">25000</div>
<div class="t f" style="top:662px;line-height:20px;font-size:18.3px;letter-spacing:0.325px;left:38.50px;-webkit-text-stroke:0.32px currentColor;">Donations</div>
<div class="t f" style="top:662px;line-height:20px;font-size:18.3px;letter-spacing:0.35px;right:1181.70px;text-align:right;margin-right:-0.35px;-webkit-text-stroke:0.32px currentColor;">10000</div>
<div class="t f" style="top:689px;line-height:20px;font-size:18.3px;letter-spacing:-0.011px;left:38.80px;-webkit-text-stroke:0.32px currentColor;">Personal Drawings:</div>
<div class="t f" style="top:715px;line-height:20px;font-size:18.3px;letter-spacing:0.103px;left:38.35px;-webkit-text-stroke:0.32px currentColor;">Political Party Advertisements</div>
<div class="t f" style="top:742px;line-height:20px;font-size:18.3px;letter-spacing:0.006px;left:38.65px;-webkit-text-stroke:0.32px currentColor;">Excessive Payments to Relatives</div>
<div class="t f" style="top:768px;line-height:20px;font-size:18.3px;letter-spacing:-0.173px;left:38.95px;-webkit-text-stroke:0.32px currentColor;">Illegal Expenses</div>
<div class="t f" style="top:795px;line-height:20px;font-size:18.3px;letter-spacing:0.103px;left:38.40px;-webkit-text-stroke:0.32px currentColor;">Interest on Delayed Tax Payments</div>
<div class="t f" style="top:822px;line-height:20px;font-size:18.3px;letter-spacing:-0.036px;left:38.50px;-webkit-text-stroke:0.32px currentColor;">CSR Expenses</div>
<div class="t f" style="top:848px;line-height:20px;font-size:18.3px;letter-spacing:0.123px;left:38.45px;-webkit-text-stroke:0.32px currentColor;">Bad Debts written off &amp; debt is irrecoverable</div>
<div class="t f" style="top:875px;line-height:20px;font-size:18.3px;letter-spacing:-0.176px;left:38.85px;-webkit-text-stroke:0.32px currentColor;">Speculative Losses</div>
<div class="t f" style="top:902px;line-height:20px;font-size:18.3px;letter-spacing:-0.034px;left:39.85px;-webkit-text-stroke:0.32px currentColor;">Wealth Tax on Business Assets:</div>
<div class="t f" style="top:928px;line-height:20px;font-size:18.3px;letter-spacing:-0.088px;left:38.65px;-webkit-text-stroke:0.32px currentColor;">Preliminary Expenses Beyond Limit</div>
<div class="t f" style="top:955px;line-height:20px;font-size:18.3px;letter-spacing:-0.05px;left:38.35px;-webkit-text-stroke:0.32px currentColor;">Non-Business Expenses</div>
<div class="t f" style="top:955px;line-height:20px;font-size:18.3px;letter-spacing:0.35px;right:1181.70px;text-align:right;margin-right:-0.35px;-webkit-text-stroke:0.32px currentColor;">15000</div>
<div class="t f" style="top:981px;line-height:20px;font-size:18.3px;letter-spacing:-0.105px;left:38.60px;-webkit-text-stroke:0.32px currentColor;">Club Membership Fees</div>
<div class="t f" style="top:1008px;line-height:20px;font-size:18.3px;letter-spacing:0.27px;left:38.60px;-webkit-text-stroke:0.32px currentColor;">Excessive Gifts/Entertainment Expenses</div>
<div class="t f" style="top:1035px;line-height:20px;font-size:18.3px;letter-spacing:-0.121px;left:38.75px;-webkit-text-stroke:0.32px currentColor;">Losses from Exempt Businesses</div>
<div class="t f" style="top:1061px;line-height:20px;font-size:18.3px;letter-spacing:0.004px;left:38.65px;-webkit-text-stroke:0.32px currentColor;">Litigation Expenses for Non-Business Matters</div>
<div class="t f" style="top:1088px;line-height:20px;font-size:18.3px;letter-spacing:-0.066px;left:38.80px;-webkit-text-stroke:0.32px currentColor;">Foreign Exchange Losses on Capital</div>
<div class="t f" style="top:1198px;line-height:20px;font-size:18.3px;letter-spacing:0.03px;left:39.00px;-webkit-text-stroke:0.32px currentColor;">Exempt Income (Section 10) (e.g., agricultural income)</div>
<div class="t f" style="top:1224px;line-height:20px;font-size:18.3px;letter-spacing:-0.132px;left:38.95px;-webkit-text-stroke:0.32px currentColor;">Capital Gains (e.g., sale of assets)</div>
<div class="t f" style="top:1224px;line-height:20px;font-size:18.3px;letter-spacing:0.35px;right:1181.70px;text-align:right;margin-right:-0.35px;-webkit-text-stroke:0.32px currentColor;">25000</div>
<div class="t f" style="top:1251px;line-height:20px;font-size:18.3px;letter-spacing:0.128px;left:38.45px;-webkit-text-stroke:0.32px currentColor;">Income from Other Sources (e.g., FD interest, rent)</div>
<div class="t f" style="top:1251px;line-height:20px;font-size:18.3px;letter-spacing:0.35px;right:1181.70px;text-align:right;margin-right:-0.35px;-webkit-text-stroke:0.32px currentColor;">5000</div>
<div class="t f" style="top:1278px;line-height:20px;font-size:18.3px;letter-spacing:0.121px;left:38.70px;-webkit-text-stroke:0.32px currentColor;">Share of Profit from Partnership Firm (Section 10(2A))</div>
<div class="t f" style="top:1304px;line-height:20px;font-size:18.3px;letter-spacing:-0.039px;left:38.75px;-webkit-text-stroke:0.32px currentColor;">Insurance Receipts for Capital Assets</div>
<div class="t f" style="top:1331px;line-height:20px;font-size:18.3px;letter-spacing:0.129px;left:38.55px;-webkit-text-stroke:0.32px currentColor;">Dividend Income</div>
<div class="t f" style="top:1357px;line-height:20px;font-size:18.3px;letter-spacing:0.135px;left:38.55px;-webkit-text-stroke:0.32px currentColor;">Interest Income (Savings A/c)</div>
<div class="t f" style="top:1384px;line-height:20px;font-size:18.3px;letter-spacing:0.21px;left:38.40px;-webkit-text-stroke:0.32px currentColor;">Rental income from HP</div>
<div class="t f" style="top:1411px;line-height:20px;font-size:18.3px;letter-spacing:0.16px;left:39.25px;-webkit-text-stroke:0.32px currentColor;">Tax Refunds</div>
<div class="t f" style="top:1112px;line-height:25px;font-size:22.0px;font-weight:700;letter-spacing:0.508px;left:40.25px;">Total Disallowed Expenses</div>
<div class="t f" style="top:1116px;line-height:20px;font-size:17.6px;font-weight:700;letter-spacing:0.622px;left:802.20px;">87,500.000</div>
<div style="position:absolute;left:35.87px;top:1165px;width:705.67px;height:26.96px;overflow:hidden;">
<div class="t f" style="top:2px;line-height:25px;font-size:22.0px;font-weight:700;letter-spacing:0.367px;left:4.03px;word-spacing:0.45px;">Less: Disallowed Income (Others heads of income Not Taxable under PGBP)</div>
</div>
<div class="t f" style="top:1462px;line-height:25px;font-size:22.0px;font-weight:700;letter-spacing:0.391px;left:40.00px;">Total Disallowed Income:</div>
<div class="t f" style="top:1462px;line-height:25px;font-size:22.0px;font-weight:700;letter-spacing:0.175px;left:795.70px;">30,000.00</div>
<div class="t f" style="top:1490px;line-height:25px;font-size:22.0px;font-weight:700;letter-spacing:0.293px;left:39.55px;">Add : Admissible Expenses not Debited to P&amp;L</div>
<div class="t f" style="top:1519px;line-height:24px;font-size:21.4px;letter-spacing:-0.056px;left:38.35px;-webkit-text-stroke:0.32px currentColor;">Expenses allowed on payment basis (Last FY Payable Ledger)</div>
<div class="t f" style="top:1519px;line-height:24px;font-size:21.4px;letter-spacing:0.35px;left:593.50px;-webkit-text-stroke:0.32px currentColor;">0</div>
<div class="t f" style="top:476px;line-height:20px;font-size:18.3px;letter-spacing:0.083px;left:899.00px;-webkit-text-stroke:0.32px currentColor;">Salary paid to proprietor</div>
<div class="b" style="left:0.00px;top:1551.00px;width:1920.00px;height:45.00px;background:#e6e6e6;"></div>
<svg width="1920" height="1615" viewBox="0 0 1920 1615"><rect x="1132.8" y="1550.8" width="88.6" height="37" fill="#fff"/><path d="M1132.8,1551 V1587 M1221.4,1551 V1587" stroke="#9a9a9a" stroke-width="1.4" fill="none"/><rect x="1131.8" y="1586.4" width="90.7" height="3.3" fill="#217346"/><rect x="156.60000000000002" y="1557" width="1.4" height="30.8" fill="#a6a6a6"/><rect x="321.3" y="1557" width="1.4" height="30.8" fill="#a6a6a6"/><rect x="514.3" y="1557" width="1.4" height="30.8" fill="#a6a6a6"/><rect x="610.0" y="1557" width="1.4" height="30.8" fill="#a6a6a6"/><rect x="797.3" y="1557" width="1.4" height="30.8" fill="#a6a6a6"/><rect x="976.8" y="1557" width="1.4" height="30.8" fill="#a6a6a6"/><rect x="1510.8" y="1557" width="1.4" height="30.8" fill="#a6a6a6"/><rect x="1706.8" y="1557" width="1.4" height="30.8" fill="#a6a6a6"/><rect x="1785.3" y="1557" width="1.4" height="30.8" fill="#a6a6a6"/><polygon points="49.2,1566.3 49.2,1577.7 42.2,1572" fill="#c2c2c2"/><polygon points="87.2,1565.8 87.2,1578.2 94.5,1572" fill="#217346"/><path d="M0,1551.7 H1132.8 M1221.4,1551.7 H1920" stroke="#a2a2a2" stroke-width="1.4" fill="none"/></svg>
<div class="t s" style="top:1561px;line-height:22px;font-size:20.2px;color:#444;letter-spacing:0.34px;left:179.85px;">Computation</div>
<div class="t s" style="top:1561px;line-height:22px;font-size:20.2px;color:#444;letter-spacing:-0.029px;left:347.15px;">Tax Calculation</div>
<div class="t s" style="top:1561px;line-height:22px;font-size:20.2px;color:#444;letter-spacing:-0.28px;left:533.65px;">Salary</div>
<div class="t s" style="top:1561px;line-height:22px;font-size:20.2px;color:#444;letter-spacing:0.262px;left:630.65px;">House Property</div>
<div class="t s" style="top:1561px;line-height:22px;font-size:20.2px;color:#444;letter-spacing:-0.033px;left:818.15px;">Others Source</div>
<div class="t s" style="top:1561px;line-height:22px;font-size:20.2px;color:#444;letter-spacing:-0.054px;left:998.35px;">Capital Gain</div>
<div class="t s" style="top:1561px;line-height:22px;font-size:20.2px;color:#444;letter-spacing:0.244px;left:1251.40px;">TDS &amp; Profit Information</div>
<div class="t s" style="top:1561px;line-height:22px;font-size:20.2px;color:#444;letter-spacing:-0.1px;left:1536.85px;">TCS Information</div>
<div class="t s" style="top:1561px;line-height:22px;font-size:20.2px;color:#444;letter-spacing:-0.35px;left:1725.50px;">P&amp;L</div>
<div class="t s" style="top:1561px;line-height:22px;font-size:20.2px;color:#444;left:1806.70px;">Balance sheet</div>
<div class="t s" style="top:1561px;line-height:22px;font-size:19.8px;font-weight:700;color:#217346;letter-spacing:-1.0px;left:1150.00px;">PGBP</div>
<div class="b" style="left:0.00px;top:1595.30px;width:1920.00px;height:20.00px;background:#f3f3f3;box-sizing:border-box;border-top:1.33px solid #c8c8c8;"></div>
<div class="t s" style="top:1602px;line-height:20px;font-size:17.4px;color:#444;letter-spacing:-0.3px;left:18.75px;">Ready</div>
<div class="t s" style="top:1603px;line-height:19px;font-size:16.8px;font-weight:700;color:#3c3c3c;letter-spacing:-0.12px;left:176.00px;">Accessibility: Investigate</div>
<svg width="1920" height="1615" viewBox="0 0 1920 1615"><circle cx="101.7" cy="1605.5" r="4.5" fill="#5c5c5c"/><rect x="108.5" y="1602.5" width="9.2" height="3.8" fill="#5c5c5c"/><rect x="115.9" y="1602.5" width="1.8" height="13" fill="#5c5c5c"/><rect x="107" y="1610.1" width="2.5" height="2.2" fill="#5c5c5c"/><rect x="112" y="1610.1" width="2.5" height="2.2" fill="#5c5c5c"/><rect x="102" y="1613.4" width="2.5" height="2.2" fill="#5c5c5c"/><rect x="107" y="1613.4" width="2.5" height="2.2" fill="#5c5c5c"/><rect x="112" y="1613.4" width="2.5" height="2.2" fill="#5c5c5c"/><rect x="98.6" y="1612.3" width="1.7" height="3" fill="#5c5c5c"/><path d="M146.4,1609.5 A10.5,10.5 0 0 1 152.8,1602.6" stroke="#5c5c5c" stroke-width="1.7" fill="none" stroke-dasharray="3.4 1.6"/><rect x="145.5" y="1612.3" width="1.7" height="3" fill="#5c5c5c"/><path d="M156.1,1600.6 V1610" stroke="#5c5c5c" stroke-width="1.7" fill="none"/><polygon points="152.8,1607.6 159.4,1607.6 156.1,1611.2" fill="#5c5c5c"/><path d="M157,1609.2 H165" stroke="#5c5c5c" stroke-width="1.7" fill="none"/><path d="M162.6,1605.6 L166.4,1609.2 L162.6,1612.8" stroke="#5c5c5c" stroke-width="1.8" fill="none"/><path d="M157.5,1611.5 L162,1615 M166,1613 L168,1615" stroke="#5c5c5c" stroke-width="2.2" fill="none"/></svg>
</body></html>
